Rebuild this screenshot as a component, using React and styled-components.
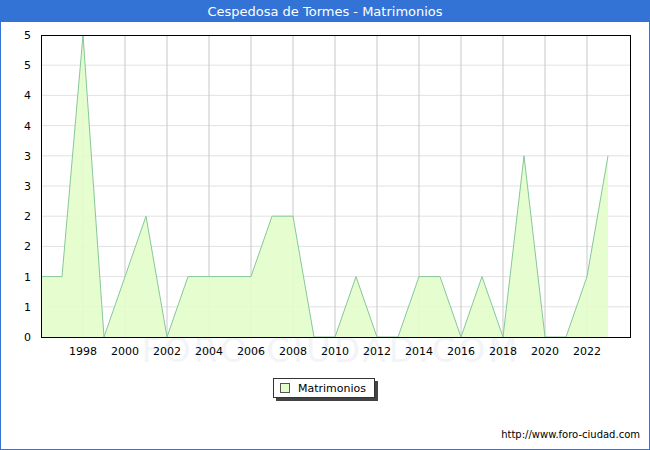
import React from "react";
import styled, { createGlobalStyle } from "styled-components";

const G = createGlobalStyle`
  html,body{margin:0;padding:0;background:#fff;}
  body{font-family:"DejaVu Sans",Verdana,sans-serif;}
`;
const Frame = styled.div`
  width:650px;height:450px;box-sizing:border-box;border:1px solid #3473d6;border-top:none;
  display:flex;flex-direction:column;background:#fff;overflow:hidden;
`;
const Title = styled.div`
  height:22px;background:#3473d6;color:#fff;font-size:13px;
  display:flex;align-items:center;justify-content:center;flex-shrink:0;
`;
const LegendRow = styled.div`display:flex;justify-content:center;margin-top:14px;padding-right:2px;`;
const Legend = styled.div`
  display:flex;align-items:center;gap:8px;height:18px;padding:0 8px 0 6px;
  border:1px solid #333;box-shadow:3px 3px 0 #444;font-size:11px;color:#000;
`;
const Swatch = styled.span`width:8px;height:8px;border:1px solid #555;background:#e3fdcb;`;
const Footer = styled.div`
  margin-top:auto;margin-bottom:9px;text-align:right;padding-right:9px;font-size:10px;color:#000;
`;

const data=[1,1,5,0,1,2,0,1,1,1,1,2,2,0,0,1,0,0,1,1,0,1,0,3,0,0,1,3];
const X=y=>40+(y-1996)*21;
const Y=v=>315-v*60.4;
const labels=["0","1","1","2","2","3","3","4","4","5","5"];

function Chart(){
  const pts=data.map((v,i)=>`${X(1996+i)},${Y(v)}`).join(" ");
  const area=`40,315 ${pts} ${X(2023)},315`;
  return (
    <svg width="648" height="342" style={{display:"block"}}>
      <text x="330" y="340" textAnchor="middle" fontSize="34" fill="#f3f4f8" fontFamily="DejaVu Sans" letterSpacing="3">FORO-CIUDAD.COM</text>
      {labels.map((l,i)=>(
        <g key={i}>
          {i>0 && i<10 && <line x1="40" x2="630" y1={315-i*30.2} y2={315-i*30.2} stroke="#e2e2e2"/>}
          <text x="30" y={319-i*30.2} textAnchor="end" fontSize="11" fill="#000">{l}</text>
        </g>
      ))}
      {Array.from({length:13},(_,k)=>1998+2*k).map(yr=>(
        <g key={yr}>
          <line x1={X(yr)} x2={X(yr)} y1="13" y2="315" stroke="#c8c8c8"/>
          <text x={X(yr)} y="333" textAnchor="middle" fontSize="11" fill="#000">{yr}</text>
        </g>
      ))}
      <polygon points={area} fill="#e3fdcb" fillOpacity="0.9"/>
      <polyline points={pts} fill="none" stroke="#86c79a" strokeWidth="1"/>
      <rect x="40.5" y="13.5" width="589" height="302" fill="none" stroke="#000"/>
    </svg>
  );
}

export default function App(){
  return (<><G/>
    <Frame>
      <Title>Cespedosa de Tormes - Matrimonios</Title>
      <Chart/>
      <LegendRow><Legend><Swatch/>Matrimonios</Legend></LegendRow>
      <Footer>http://www.foro-ciudad.com</Footer>
    </Frame></>);
}
